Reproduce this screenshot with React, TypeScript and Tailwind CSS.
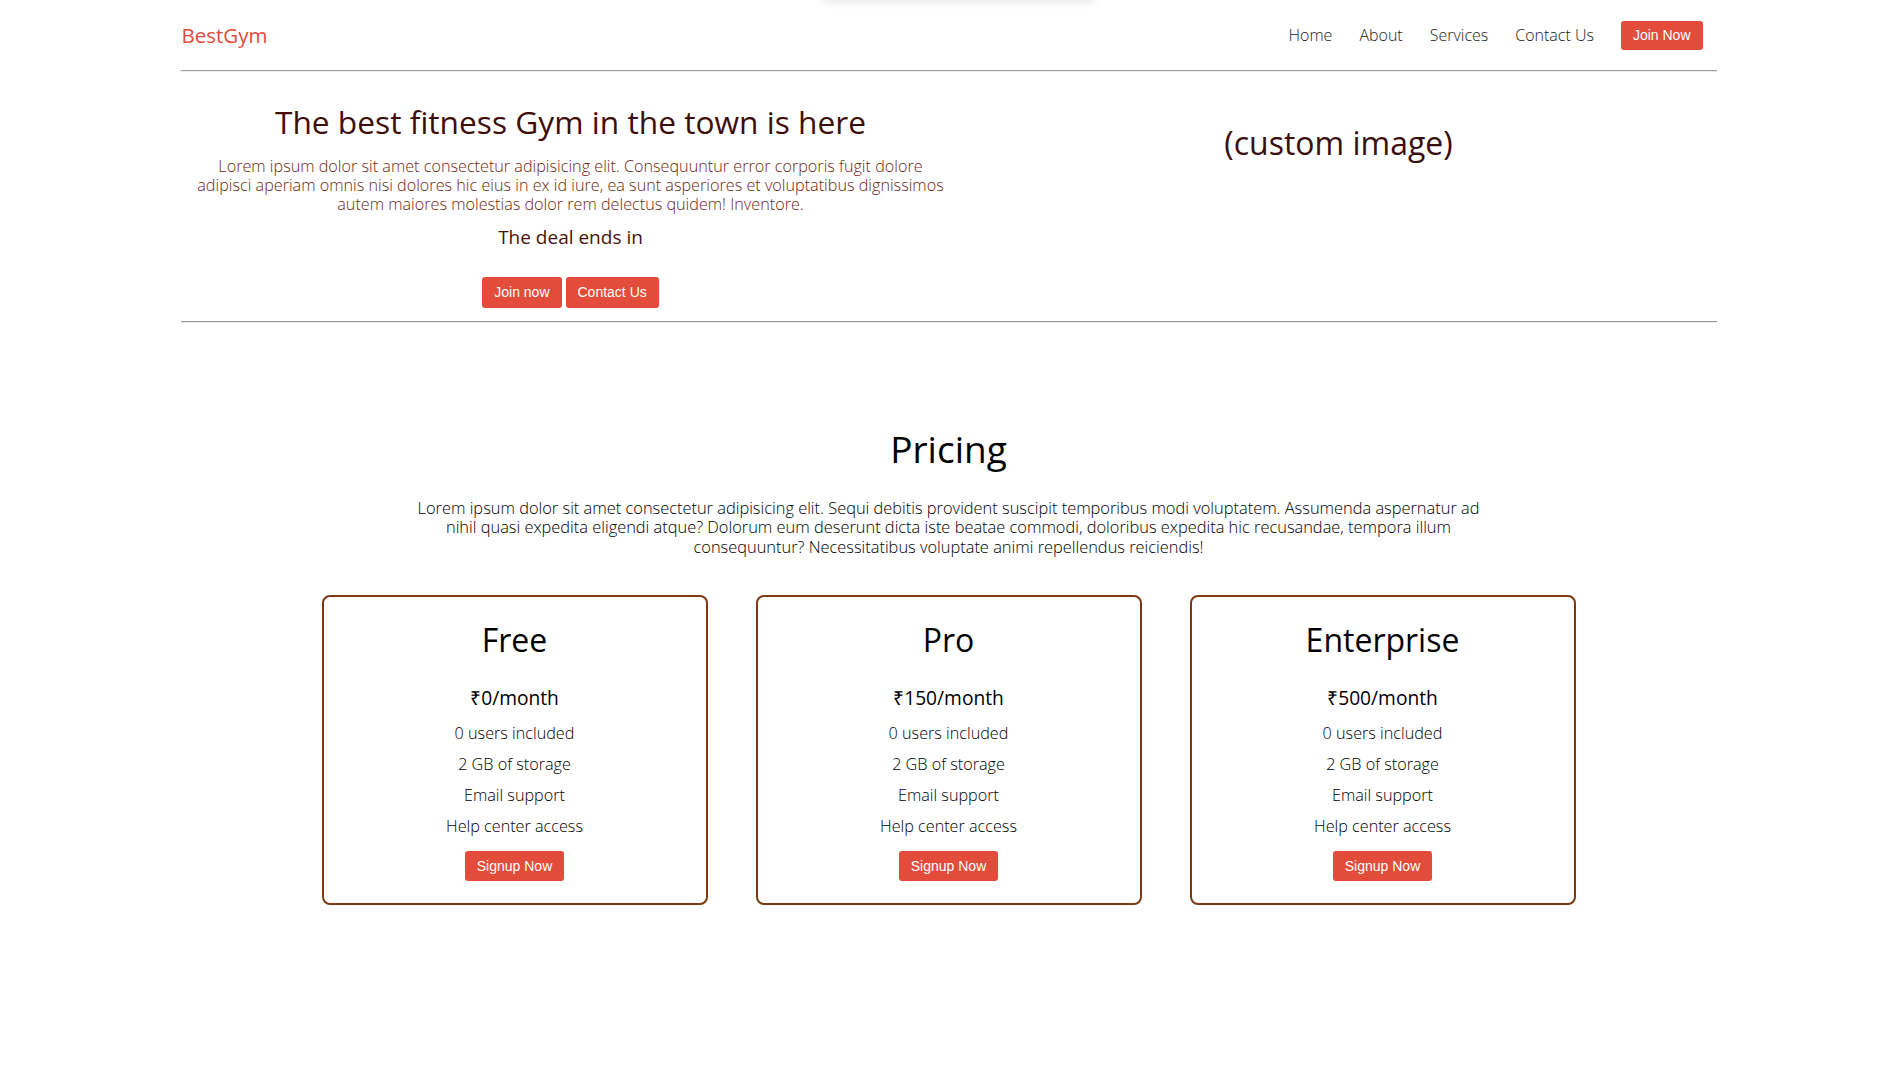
const navLinks = ['Home', 'About', 'Services', 'Contact Us']

const plans = [
  { name: 'Free', price: '₹0/month' },
  { name: 'Pro', price: '₹150/month' },
  { name: 'Enterprise', price: '₹500/month' },
]

const features = ['0 users included', '2 GB of storage', 'Email support', 'Help center access']

function RedButton({ children, className = '' }: { children: React.ReactNode; className?: string }) {
  return (
    <button
      className={`bg-[#e34b3a] text-white font-['Liberation_Sans',Arial,sans-serif] text-[14px] px-3 rounded-[3px] ${className}`}
    >
      {children}
    </button>
  )
}

function Divider() {
  return <div className="h-[2px] border-t border-t-[#9a9a9a] border-b border-b-[#ececec]" />
}

export default function App() {
  return (
    <div className="relative min-h-screen bg-white font-['Open_Sans',sans-serif]">
      {/* faint browser overlay shadow at the top edge */}
      <div className="absolute left-[822px] top-[-10px] w-[273px] h-[10px] rounded-full shadow-[0_2px_8px_rgba(0,0,0,0.10)]" />

      <div className="w-[1536px] mx-auto">
        {/* Navbar */}
        <nav className="h-[70px] flex items-center justify-between pr-[14px]">
          <a href="#" className="text-[20.5px] text-[#e34b3a] pl-[1px]">
            BestGym
          </a>
          <ul className="flex items-center gap-[27px] text-[16px] font-light text-[#1c1c1c]">
            {navLinks.map((link) => (
              <li key={link}>
                <a href="#">{link}</a>
              </li>
            ))}
            <li>
              <RedButton className="h-[29px]">Join Now</RedButton>
            </li>
          </ul>
        </nav>
        <Divider />

        {/* Hero */}
        <section className="flex h-[249px]">
          <div className="w-1/2 pl-[12px] flex flex-col items-center text-center">
            <h1 className="mt-[30px] text-[31.7px] leading-[40px] text-[#3f0d08]">
              The best fitness Gym in the town is here
            </h1>
            <p className="mt-[15px] text-[16.2px] leading-[19.2px] font-light text-[#6e1f10]">
              Lorem ipsum dolor sit amet consectetur adipisicing elit. Consequuntur error corporis fugit dolore
              <br />
              adipisci aperiam omnis nisi dolores hic eius in ex id iure, ea sunt asperiores et voluptatibus dignissimos
              <br />
              autem maiores molestias dolor rem delectus quidem! Inventore.
            </p>
            <h3 className="mt-[8px] text-[19px] leading-[28px] text-[#4a1208]">The deal ends in</h3>
            <div className="mt-[26px] flex gap-[4px]">
              <RedButton className="h-[31px]">Join now</RedButton>
              <RedButton className="h-[31px]">Contact Us</RedButton>
            </div>
          </div>
          <div className="w-1/2 pl-[12px] flex justify-center">
            <h2 className="mt-[51px] text-[32px] leading-[40px] text-[#3b0e0e]">(custom image)</h2>
          </div>
        </section>
        <Divider />
      </div>

      {/* Pricing */}
      <section className="flex flex-col items-center text-center pb-[170px]">
        <h2 className="mt-[104px] text-[37px] leading-[44px] text-black">Pricing</h2>
        <p className="mt-[27px] w-[1200px] text-[16.4px] leading-[19.4px] font-light text-black">
          Lorem ipsum dolor sit amet consectetur adipisicing elit. Sequi debitis provident suscipit temporibus modi voluptatem. Assumenda aspernatur ad
          <br />
          nihil quasi expedita eligendi atque? Dolorum eum deserunt dicta iste beatae commodi, doloribus expedita hic recusandae, tempora illum
          <br />
          consequuntur? Necessitatibus voluptate animi repellendus reiciendis!
        </p>

        <div className="mt-[39px] flex gap-[48px]">
          {plans.map((plan) => (
            <div
              key={plan.name}
              className="w-[386px] h-[310px] border-2 border-[#7b3a12] rounded-[8px] flex flex-col items-center pt-[21px]"
            >
              <h3 className="text-[32px] leading-[44px] text-black">{plan.name}</h3>
              <p className="mt-[21px] text-[19.2px] leading-[30px] font-medium text-black">{plan.price}</p>
              <ul className="mt-[5px] text-[16.2px] leading-[31px] font-light text-black">
                {features.map((f) => (
                  <li key={f}>{f}</li>
                ))}
              </ul>
              <RedButton className="mt-[9px] h-[30px]">Signup Now</RedButton>
            </div>
          ))}
        </div>
      </section>
    </div>
  )
}
